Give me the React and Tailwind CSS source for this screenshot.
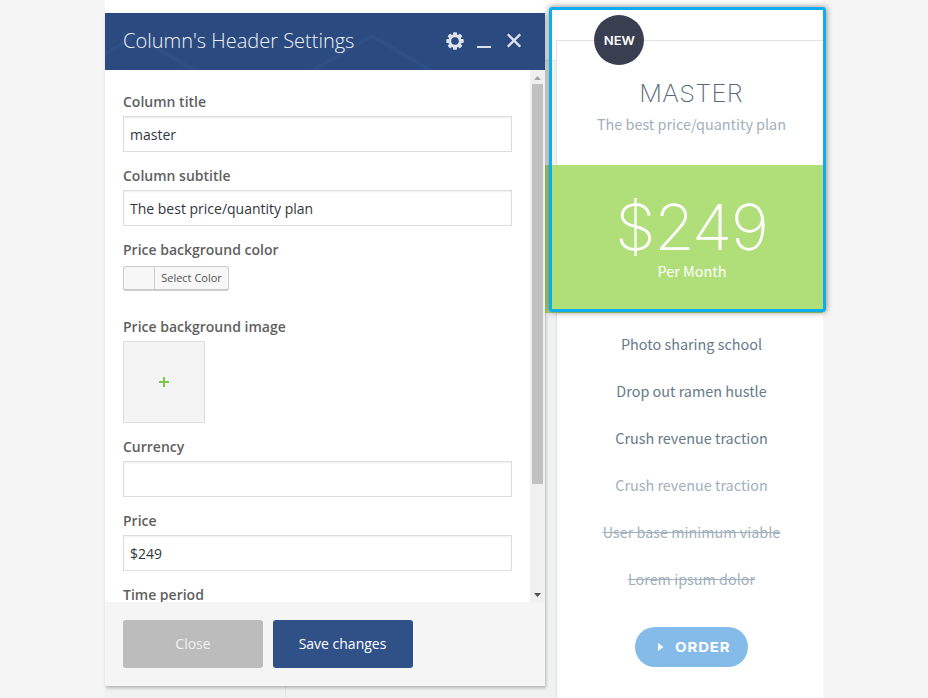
const features = [
  { text: "Photo sharing school", style: "text-[#667a87]" },
  { text: "Drop out ramen hustle", style: "text-[#667a87]" },
  { text: "Crush revenue traction", style: "text-[#667a87]" },
  { text: "Crush revenue traction", style: "text-[#a0b0bc]" },
  { text: "User base minimum viable", style: "text-[#a0b0bc] line-through" },
  { text: "Lorem ipsum dolor", style: "text-[#a0b0bc] line-through" },
];

function Field({ label, children }) {
  return (
    <div className="mb-3.5 flex flex-col items-start gap-1">
      <label className="text-sm leading-5 font-semibold text-[#5f5f5f]">{label}</label>
      {children}
    </div>
  );
}

function TextInput({ value }) {
  return (
    <div className="flex h-9 w-[389px] items-center border border-[#dddddd] bg-white px-1.5 pt-0.5 text-sm text-[#32373c] shadow-[inset_0_1px_2px_rgba(0,0,0,0.07)]">
      {value}
    </div>
  );
}

function PanelHeader() {
  return (
    <header className="relative flex h-[57px] shrink-0 items-center overflow-hidden bg-[#2b4b80] pr-6 pb-0.5 pl-[18px] text-[#dde3ed]">
      <svg className="absolute inset-0" width="440" height="57" fill="none" stroke="#2f5087" strokeWidth="3.5">
        <path d="M-4 43 L31 23 L94 60 M203 60 L267 23 L330 60" />
      </svg>
      <h1 className="relative grow text-[20px] leading-7 font-light text-[#f0f3f8]">Column's Header Settings</h1>
      <svg className="relative mr-[13.5px]" width="18" height="18" viewBox="0 0 18 18">
        <g fill="#dde3ed">
          <rect x="7" y="0.3" width="4" height="17.4" rx="0.8" />
          <rect x="7" y="0.3" width="4" height="17.4" rx="0.8" transform="rotate(45 9 9)" />
          <rect x="7" y="0.3" width="4" height="17.4" rx="0.8" transform="rotate(90 9 9)" />
          <rect x="7" y="0.3" width="4" height="17.4" rx="0.8" transform="rotate(135 9 9)" />
          <circle cx="9" cy="9" r="6.7" />
        </g>
        <circle cx="9" cy="9" r="3.8" fill="#2b4b80" />
      </svg>
      <div className="relative mt-[13px] mr-[15px] h-0.5 w-3.5 bg-[#dde3ed]" />
      <svg className="relative" width="15" height="15" fill="none" stroke="#dde3ed" strokeWidth="2.3">
        <path d="M1.8 1.3 L14.2 13.7 M14.2 1.3 L1.8 13.7" />
      </svg>
    </header>
  );
}

function SettingsPanel() {
  return (
    <section className="absolute top-[13px] left-[105px] flex h-[673px] w-[440px] flex-col bg-[#f5f5f5] shadow-[1px_2px_3px_rgba(0,0,0,0.25)]">
      <PanelHeader />
      <div className="flex h-[532px] shrink-0 overflow-hidden bg-white">
        <div className="grow pt-[22px] pl-[18px]">
          <Field label="Column title"><TextInput value="master" /></Field>
          <Field label="Column subtitle"><TextInput value="The best price/quantity plan" /></Field>
          <Field label="Price background color">
            <div className="mt-0.5 mb-3 flex h-[25px] w-[106px] rounded-[3px] border border-b-2 border-[#cccccc] bg-[#f7f7f7]">
              <div className="w-[31px] border-r border-[#cccccc]" />
              <span className="grow text-center text-[11px] leading-[22px] text-[#555555]">Select Color</span>
            </div>
          </Field>
          <Field label="Price background image">
            <div className="flex h-[82px] w-[82px] items-center justify-center border border-[#dddddd] bg-[#f4f4f4]">
              <svg width="10" height="10" stroke="#7ac943" strokeWidth="2"><path d="M5 0 V10 M0 5 H10" /></svg>
            </div>
          </Field>
          <Field label="Currency"><TextInput value="" /></Field>
          <Field label="Price"><TextInput value="$249" /></Field>
          <Field label="Time period" />
        </div>
        <div className="flex w-[15px] shrink-0 flex-col items-center bg-[#f0f0f0]">
          <svg className="shrink-0" width="15" height="14"><path d="M4 10 L7.5 6 L11 10 Z" fill="#a3a3a3" /></svg>
          <div className="h-[400px] w-[11px] bg-[#c1c1c1]" />
          <svg className="mt-auto shrink-0" width="15" height="14"><path d="M4 5 L7.5 9 L11 5 Z" fill="#505050" /></svg>
        </div>
      </div>
      <footer className="flex gap-2.5 px-[18px] pt-[18px]">
        <button className="h-12 w-[140px] rounded-[3px] bg-[#bcbcbc] text-sm text-[#f1f1f1]">Close</button>
        <button className="h-12 w-[140px] rounded-[3px] bg-[#2f5188] pr-px text-sm text-white">Save changes</button>
      </footer>
    </section>
  );
}

function PlanColumn() {
  return (
    <article className="mt-10 flex h-[658px] w-[267px] flex-col border-t border-l border-[#dfe3e8] bg-white text-center font-['Noto_Sans_CJK_SC','Noto_Sans',sans-serif] text-[14.4px]">
      <div className="flex h-[124px] flex-col items-center pt-[37px] pl-[3px]">
        <h2 className="h-8 scale-x-[1.08] font-['Inter',sans-serif] text-[23.5px] leading-8 font-[200] tracking-[0.3px] text-[#566b78]">MASTER</h2>
        <p className="leading-7 whitespace-nowrap text-[#a0b0bc]">The best price/quantity plan</p>
      </div>
      <div className="-ml-3 flex h-[148px] shrink-0 flex-col items-center bg-[#b0df79] pt-[30px] pl-3.5 text-white">
        <div className="h-[64px] scale-x-[1.04] font-['Inter',sans-serif] text-[63px] leading-[64px] font-[200] tracking-[-1.5px]">$249</div>
        <p className="pl-0.5 leading-6">Per Month</p>
      </div>
      <ul className="flex flex-col pt-[7px] pl-[3px]">
        {features.map((feature, index) => (
          <li key={index} className={`h-[47px] leading-[47px] whitespace-nowrap ${feature.style}`}>{feature.text}</li>
        ))}
      </ul>
      <button className="mt-[25px] ml-0.5 flex h-10 w-[113px] shrink-0 items-center self-center rounded-full bg-[#85bbe9] pl-[23px] font-['Inter',sans-serif] text-[13.5px] font-bold tracking-[0.8px] text-white">
        <svg className="mr-[11px]" width="6" height="8" fill="white"><path d="M0 0 L5.5 4 L0 8 Z" /></svg>
        <span className="origin-left scale-x-[1.11]">ORDER</span>
      </button>
    </article>
  );
}

export default function App() {
  return (
    <main className="relative h-[698px] w-[928px] overflow-hidden bg-[#f5f5f5] pl-[105px] font-['Open_Sans',sans-serif]">
      <div className="flex h-full w-[718px] bg-white">
        <div className="mt-[60px] flex w-[451px] shrink-0 border-t border-[#dfe3e6] bg-[#f0f2f2]">
          <div className="w-[181px] border-r border-[#e0e4e7]" />
        </div>
        <PlanColumn />
      </div>
      <div className="absolute top-[7px] left-[549px] h-[305px] w-[277px] rounded-[3px] border-3 border-[#0dadee] shadow-[0_0_6px_rgba(0,0,0,0.5)]" />
      <SettingsPanel />
      <div className="absolute top-[15px] left-[594px] flex h-[50px] w-[50px] items-center justify-center rounded-full bg-[#393e50] pt-0.5 font-['Inter',sans-serif] text-xs font-semibold text-white">
        <span className="scale-x-[1.09]">NEW</span>
      </div>
    </main>
  );
}
